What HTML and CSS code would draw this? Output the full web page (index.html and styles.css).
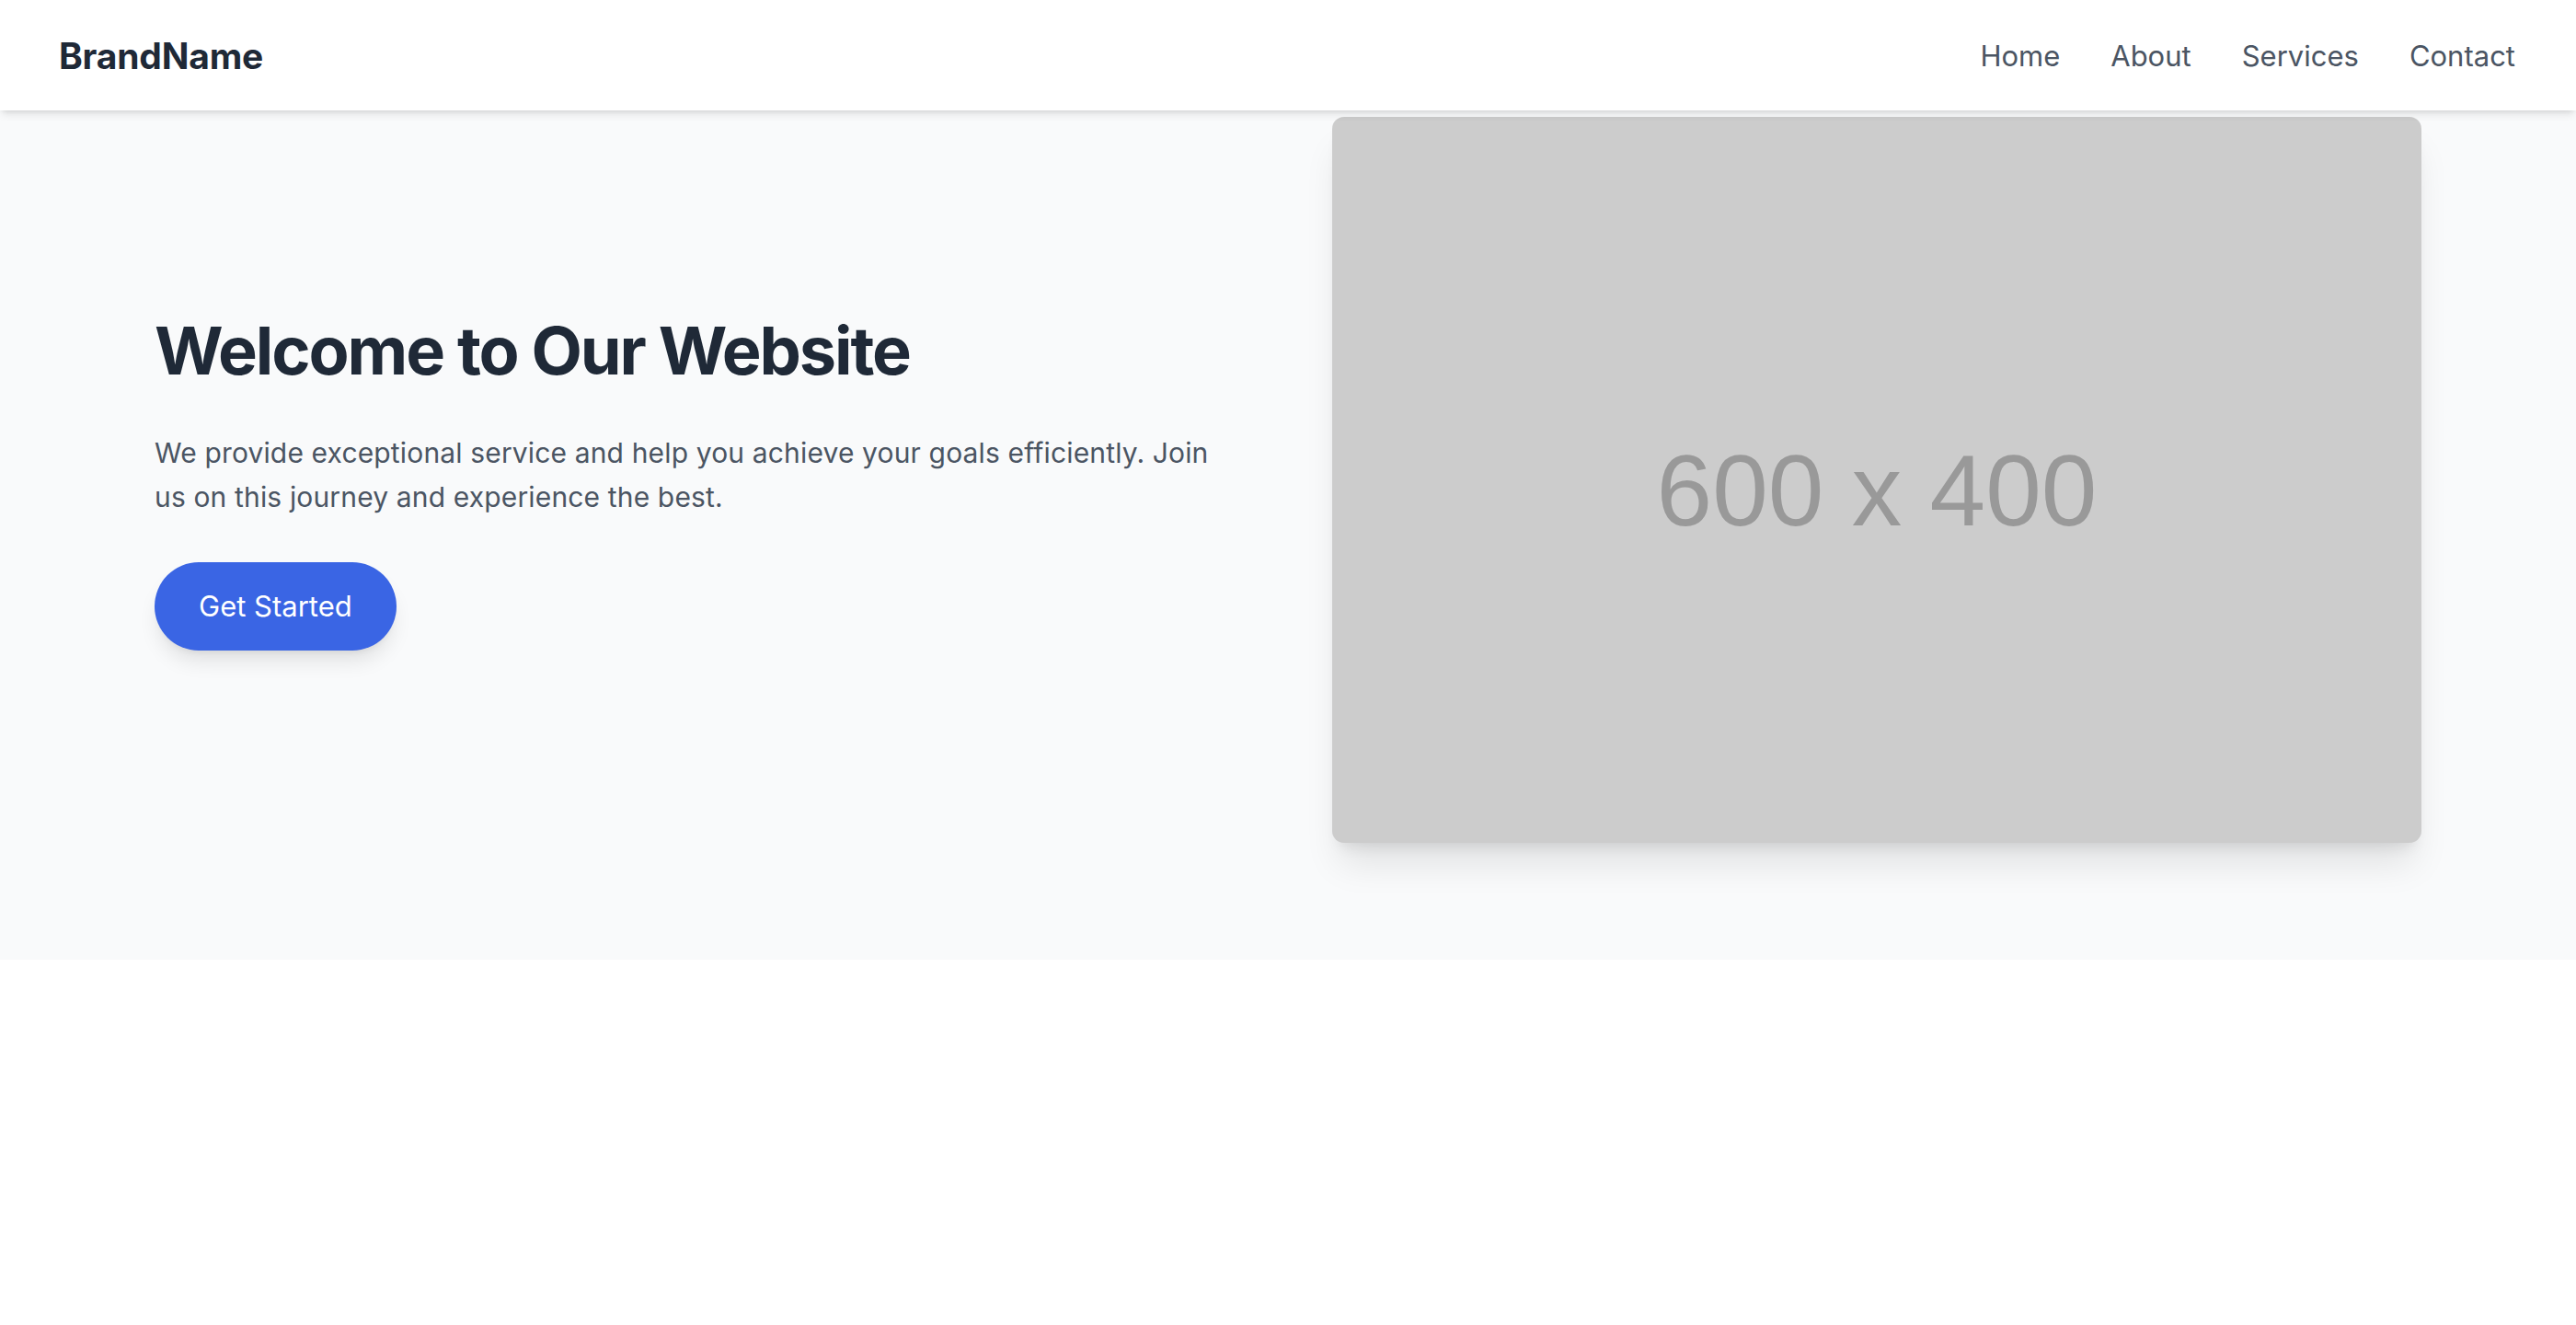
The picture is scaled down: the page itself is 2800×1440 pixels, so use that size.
FILE: index.html
```html
<!DOCTYPE html>
<html lang="en">
<head>
<meta charset="utf-8">
<title>BrandName</title>
<link rel="stylesheet" href="styles.css">
</head>
<body>
<header class="site-header">
  <div class="brand">BrandName</div>
  <nav class="nav">
    <a href="#" class="nav-link">Home</a>
    <a href="#" class="nav-link">About</a>
    <a href="#" class="nav-link">Services</a>
    <a href="#" class="nav-link">Contact</a>
  </nav>
</header>
<section class="hero">
  <div class="hero-text">
    <h1 class="hero-title">Welcome to Our Website</h1>
    <p class="hero-lead">We provide exceptional service and help you achieve your goals efficiently. Join us on this journey and experience the best.</p>
    <a href="#" class="btn">Get Started</a>
  </div>
  <div class="hero-media">
    <div class="placeholder"><span class="placeholder-label">600 x 400</span></div>
  </div>
</section>
</body>
</html>
```
FILE: styles.css
```css
* { box-sizing: border-box; }
html, body { margin: 0; padding: 0; }
body {
  font-family: Inter, "Noto Sans", "Liberation Sans", sans-serif;
  background: #ffffff;
  color: #1f2937;
}
.site-header {
  position: relative;
  z-index: 2;
  height: 120px;
  padding: 0 66px 0 64px;
  display: flex;
  align-items: center;
  justify-content: space-between;
  background: #ffffff;
  box-shadow: 0 6px 9px -2px rgba(0,0,0,0.1), 0 3px 6px -3px rgba(0,0,0,0.1);
}
.brand {
  font-size: 39px;
  font-weight: 700;
  color: #1f2937;
  letter-spacing: -0.2px;
}
.nav {
  display: flex;
  gap: 55px;
}
.nav-link {
  font-size: 31px;
  color: #4b5563;
  text-decoration: none;
}
.hero {
  background: #f9fafb;
  padding: 7px 168px 127px 168px;
  display: grid;
  grid-template-columns: 1fr 1fr;
  column-gap: 96px;
  align-items: center;
}
.hero-text {
  display: flex;
  flex-direction: column;
  align-items: flex-start;
  padding-top: 9px;
}
.hero-title {
  margin: 0 0 51px 0;
  font-size: 72px;
  line-height: 72px;
  font-weight: 700;
  color: #1f2937;
  letter-spacing: -2.1px;
}
.hero-lead {
  margin: 0 0 47px 0;
  max-width: 1170px;
  font-size: 30px;
  line-height: 48px;
  color: #4b5563;
  letter-spacing: 0.15px;
}
.btn {
  display: inline-block;
  padding: 24px 48px;
  font-size: 31px;
  line-height: 48px;
  color: #ffffff;
  background: #3a65e4;
  border-radius: 9999px;
  text-decoration: none;
  box-shadow: 0 15px 22px -4px rgba(0,0,0,0.1), 0 6px 9px -6px rgba(0,0,0,0.1);
}
.hero-media {
  display: flex;
}
.placeholder {
  width: 100%;
  aspect-ratio: 3 / 2;
  background: #cccccc;
  border-radius: 13px;
  box-shadow: 0 30px 38px -8px rgba(0,0,0,0.1), 0 12px 15px -9px rgba(0,0,0,0.1);
  display: flex;
  align-items: center;
  justify-content: center;
  padding-top: 22px;
}
.placeholder-label {
  font-family: "Liberation Sans", Arial, sans-serif;
  font-size: 109px;
  color: #999999;
}
```
